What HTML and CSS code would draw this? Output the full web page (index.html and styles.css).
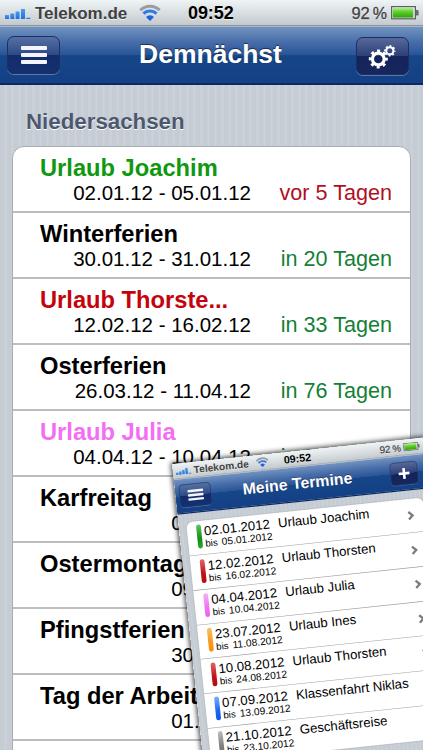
FILE: index.html
```
<!DOCTYPE html>
<html lang="de">

<head>
    <meta charset="UTF-8">
    <meta name="viewport" content="width=device-width, initial-scale=1.0">
    <title>Demnächst</title>
    <link rel="stylesheet" href="styles.css">
</head>

<body>
    <!-- shared icons -->
    <svg class="defs" width="0" height="0">
        <defs>
            <linearGradient id="bar-fill" x1="0" y1="0" x2="0" y2="1">
                <stop offset="0" stop-color="#4a9cf0" />
                <stop offset="1" stop-color="#1f6fe0" />
            </linearGradient>
            <linearGradient id="battery-fill" x1="0" y1="0" x2="0" y2="1">
                <stop offset="0" stop-color="#b4ec8c" />
                <stop offset="0.4" stop-color="#5fd02c" />
                <stop offset="1" stop-color="#33a010" />
            </linearGradient>
        </defs>
        <symbol id="signal" viewBox="0 0 26 12">
            <g fill="url(#bar-fill)">
                <rect x="0" y="7" width="4" height="4" />
                <rect x="5.3" y="5.5" width="4" height="5.5" />
                <rect x="10.6" y="3.5" width="4" height="7.5" />
                <rect x="16" y="1" width="4" height="10" />
                <rect x="21.3" y="9.6" width="4" height="1.4" />
            </g>
        </symbol>
        <symbol id="wifi" viewBox="0 0 22 17">
            <g fill="none" stroke-width="3">
                <path d="M1.3 6.2a13.6 13.6 0 0 1 19.4 0" stroke="#9a9da0" />
                <path d="M4.5 9.6a9.2 9.2 0 0 1 13 0" stroke="#2f7be8" />
            </g>
            <path d="M11 17l-4-4a5.6 5.6 0 0 1 8 0z" fill="#1d62dd" />
        </symbol>
        <symbol id="battery" viewBox="0 0 28 14">
            <rect x="0.6" y="0.6" width="23.8" height="12.2" fill="#e2e5e6" stroke="#5b6061" stroke-width="1.2" />
            <rect x="1.8" y="1.8" width="20.4" height="9.8" fill="url(#battery-fill)" />
            <path d="M25 4h1.3a1.4 1.4 0 0 1 1.4 1.4v2.8a1.4 1.4 0 0 1-1.4 1.4H25z" fill="#686d6f" />
        </symbol>
        <symbol id="chevron" viewBox="0 0 12 16">
            <path d="M2.3 1.8L8.8 8l-6.5 6.2" fill="none" stroke="#7c7c7c" stroke-width="3.9" />
        </symbol>
    </svg>

    <div class="phone">
        <div class="status-bar">
            <svg class="signal"><use href="#signal" /></svg>
            <span class="carrier">Telekom.de</span>
            <svg class="wifi"><use href="#wifi" /></svg>
            <span class="clock">09:52</span>
            <span class="percent">92<span class="sign">%</span></span>
            <svg class="battery"><use href="#battery" /></svg>
        </div>
        <header class="nav-bar">
            <button class="nav-button menu"><i></i><i></i><i></i></button>
            <h1>Demnächst</h1>
            <button class="nav-button settings">
                <svg width="28" height="26" viewBox="0 0 28 26" fill="none" stroke="#fff">
                    <circle cx="10.3" cy="16" r="5.9" stroke-width="3.2" />
                    <circle cx="10.3" cy="16" r="8" stroke-width="3" stroke-dasharray="3 3.28" stroke-dashoffset="1.5" />
                    <circle cx="21.8" cy="7.8" r="3.6" stroke-width="2.1" />
                    <circle cx="21.8" cy="7.8" r="4.9" stroke-width="1.6" stroke-dasharray="1.9 1.95" stroke-dashoffset="0.9" />
                </svg>
            </button>
        </header>

        <main class="content">
            <h2>Niedersachsen</h2>
            <ul class="card">
                <li class="holiday">
                    <div class="name green">Urlaub Joachim</div>
                    <div class="info"><span class="date">02.01.12 - 05.01.12</span><span class="days past">vor 5 Tagen</span></div>
                </li>
                <li class="holiday">
                    <div class="name">Winterferien</div>
                    <div class="info"><span class="date">30.01.12 - 31.01.12</span><span class="days">in 20 Tagen</span></div>
                </li>
                <li class="holiday">
                    <div class="name red">Urlaub Thorste...</div>
                    <div class="info"><span class="date">12.02.12 - 16.02.12</span><span class="days">in 33 Tagen</span></div>
                </li>
                <li class="holiday">
                    <div class="name">Osterferien</div>
                    <div class="info"><span class="date">26.03.12 - 11.04.12</span><span class="days">in 76 Tagen</span></div>
                </li>
                <li class="holiday">
                    <div class="name pink">Urlaub Julia</div>
                    <div class="info"><span class="date">04.04.12 - 10.04.12</span><span class="days">in 85 Tagen</span></div>
                </li>
                <li class="holiday">
                    <div class="name">Karfreitag</div>
                    <div class="info"><span class="date">06.04.12</span></div>
                </li>
                <li class="holiday">
                    <div class="name">Ostermontag</div>
                    <div class="info"><span class="date">09.04.12</span></div>
                </li>
                <li class="holiday">
                    <div class="name">Pfingstferien</div>
                    <div class="info"><span class="date">30.04.12</span></div>
                </li>
                <li class="holiday">
                    <div class="name">Tag der Arbeit</div>
                    <div class="info"><span class="date">01.05.12</span></div>
                </li>
                <li class="holiday"></li>
            </ul>
        </main>
    </div>

    <div class="phone front">
        <div class="status-bar">
            <svg class="signal"><use href="#signal" /></svg>
            <span class="carrier">Telekom.de</span>
            <svg class="wifi"><use href="#wifi" /></svg>
            <span class="clock">09:52</span>
            <span class="percent">92<span class="sign">%</span></span>
            <svg class="battery"><use href="#battery" /></svg>
        </div>
        <header class="nav-bar">
            <button class="nav-button menu"><i></i><i></i><i></i></button>
            <h1>Meine Termine</h1>
            <button class="nav-button add">
                <svg width="20" height="20" viewBox="0 0 20 20"><path d="M10 1v18M1 10h18" stroke="#fff" stroke-width="4.4" /></svg>
            </button>
        </header>

        <main class="content">
            <ul class="card">
                <li class="event">
                    <span class="marker green"></span>
                    <div class="when">02.01.2012<small>bis<span>05.01.2012</span></small></div>
                    <div class="what">Urlaub Joachim</div>
                    <svg class="chevron"><use href="#chevron" /></svg>
                </li>
                <li class="event">
                    <span class="marker red"></span>
                    <div class="when">12.02.2012<small>bis<span>16.02.2012</span></small></div>
                    <div class="what">Urlaub Thorsten</div>
                    <svg class="chevron"><use href="#chevron" /></svg>
                </li>
                <li class="event">
                    <span class="marker pink"></span>
                    <div class="when">04.04.2012<small>bis<span>10.04.2012</span></small></div>
                    <div class="what">Urlaub Julia</div>
                    <svg class="chevron"><use href="#chevron" /></svg>
                </li>
                <li class="event">
                    <span class="marker orange"></span>
                    <div class="when">23.07.2012<small>bis<span>11.08.2012</span></small></div>
                    <div class="what">Urlaub Ines</div>
                    <svg class="chevron"><use href="#chevron" /></svg>
                </li>
                <li class="event">
                    <span class="marker red"></span>
                    <div class="when">10.08.2012<small>bis<span>24.08.2012</span></small></div>
                    <div class="what">Urlaub Thorsten</div>
                    <svg class="chevron"><use href="#chevron" /></svg>
                </li>
                <li class="event">
                    <span class="marker blue"></span>
                    <div class="when">07.09.2012<small>bis<span>13.09.2012</span></small></div>
                    <div class="what">Klassenfahrt Niklas</div>
                    <svg class="chevron"><use href="#chevron" /></svg>
                </li>
                <li class="event">
                    <span class="marker gray"></span>
                    <div class="when">21.10.2012<small>bis<span>23.10.2012</span></small></div>
                    <div class="what">Geschäftsreise</div>
                    <svg class="chevron"><use href="#chevron" /></svg>
                </li>
            </ul>
        </main>
    </div>
</body>

</html>
```
FILE: styles.css
```
* {
    margin: 0;
    padding: 0;
    box-sizing: border-box;
}

body {
    position: relative;
    width: 423px;
    height: 750px;
    overflow: hidden;
    font-family: "Liberation Sans", Arial, sans-serif;
    color: #000;
}

ul {
    list-style: none;
}

.defs {
    display: block;
    position: absolute;
}

.phone {
    width: 423px;
    height: 750px;
    overflow: hidden;
    background: repeating-linear-gradient(90deg, #c5ccd4 0 4px, #cbd2d9 5px 6px, #c5ccd4 7px);
}

/* second phone, tilted over the lower right corner */
.front {
    position: absolute;
    left: 171.5px;
    top: 464px;
    height: 540px;
    transform-origin: 0 0;
    transform: rotate(-6deg) scale(0.6);
    box-shadow: 0 0 9px 2px rgba(0, 0, 0, 0.75);
}

/* status bar */

.status-bar {
    display: flex;
    align-items: center;
    height: 26px;
    padding: 0 4px 0 5px;
    background: linear-gradient(#eff4f5, #d5dbde 60%, #c3c9cc);
    border-bottom: 1px solid #8e9599;
    color: #414141;
    text-shadow: 0 1px 0 rgba(255, 255, 255, 0.7);
}

.front .status-bar {
    padding-right: 9px;
}

.signal {
    width: 26px;
    height: 12px;
    margin-top: 3px;
}

.carrier {
    width: 95px;
    margin: 2px 0 0 4px;
    font-size: 17px;
    font-weight: bold;
}

.wifi {
    width: 22px;
    height: 17px;
    margin-left: 9px;
}

.clock {
    margin: 2px 0 0 27px;
    font-size: 18px;
    font-weight: bold;
    letter-spacing: -0.1px;
    color: #000;
}

.front .clock {
    margin-left: 25px;
}

.percent {
    margin: 1px 0 0 auto;
    font-size: 16.5px;
    -webkit-text-stroke: 0.3px #414141;
}

.sign {
    margin-left: 3px;
    font-size: 16px;
}

.battery {
    width: 28px;
    height: 14px;
    margin-left: 4px;
}

/* navigation bar */

.nav-bar {
    display: flex;
    justify-content: space-between;
    height: 59px;
    padding: 9px 14px 0 7px;
    background: linear-gradient(#7393c0, #4a70ab 25%, #295497 50%, #164688 51%, #144085);
    border-top: 1px solid #a5b9d6;
    border-bottom: 2px solid #0d2a60;
}

.nav-bar h1 {
    padding: 1px 0 0 5px;
    font-size: 26.5px;
    line-height: 34px;
    color: #fff;
    text-shadow: 0 -1px 1px rgba(0, 0, 0, 0.55);
}

.front .nav-bar {
    padding-right: 17px;
}

.front .nav-bar h1 {
    padding: 1px 11px 0 0;
}

.nav-button {
    display: flex;
    flex-direction: column;
    align-items: center;
    justify-content: center;
    gap: 3px;
    width: 53px;
    height: 38px;
    border: 1px solid #1a2f62;
    border-radius: 7px;
    background: linear-gradient(#5670a3, #2d4a88 50%, #132d6c 51%, #15306f);
    box-shadow: 0 1px 0 rgba(255, 255, 255, 0.3);
}

.menu i {
    width: 26px;
    height: 4px;
    border-radius: 1px;
    background: #f3f5fa;
}

.settings,
.add {
    margin-top: 1px;
    background: linear-gradient(#58699a, #2b3f78 50%, #14235a 51%, #17275c);
}

.add {
    width: 46px;
}

/* content */

.content {
    padding: 0 12px;
}

.content h2 {
    padding: 24px 0 0 14px;
    font-size: 22.3px;
    line-height: 26px;
    color: #4d576e;
    text-shadow: 0 1px 0 #fff;
}

.card {
    background: #fff;
    border: 1px solid #a9adb1;
    border-radius: 12px;
    overflow: hidden;
}

.content h2 + .card {
    margin-top: 11px;
}

.holiday {
    height: 66px;
    padding: 7px 18px 0 27px;
    border-bottom: 2px solid #bdbdbd;
}

.name {
    font-size: 23.7px;
    font-weight: bold;
    line-height: 28px;
}

.info {
    display: flex;
    line-height: 22px;
}

.date {
    width: 211px;
    font-size: 20.5px;
    text-align: right;
}

.days {
    margin-left: auto;
    font-size: 21.6px;
    color: #138036;
}

.past {
    color: #b00f24;
}

.name.green {
    color: #109810;
}

.name.red {
    color: #c4040c;
}

.name.pink {
    color: #f46ef4;
}

/* event list */

.front .card {
    margin-top: 12.5px;
}

.event {
    display: flex;
    height: 57.7px;
    padding: 5.5px 17px 0 15.5px;
    border-bottom: 1px solid #9c9c9c;
}

.event:last-child {
    border-bottom: 0;
}

.marker {
    width: 8px;
    height: 40px;
    margin-top: 1px;
    border-radius: 4px;
}

.marker.green {
    background: linear-gradient(#5cc45c, #109018 60%, #2aa82a);
}

.marker.red {
    background: linear-gradient(#e06868, #c01018 60%, #b80810);
}

.marker.pink {
    background: linear-gradient(#f8b0f8, #f070f0 60%, #f060f0);
}

.marker.orange {
    background: linear-gradient(#f8c070, #f89818 60%, #f89008);
}

.marker.blue {
    background: linear-gradient(#80b0ff, #1868f0 60%, #0858f0);
}

.marker.gray {
    background: linear-gradient(#c0c0c0, #808080 60%, #707070);
}

.when {
    width: 124px;
    margin-left: 5px;
    font-size: 22px;
    line-height: 25px;
}

.when small {
    display: flex;
    gap: 7px;
    font-size: 16px;
    line-height: 18px;
}

.when small span {
    font-size: 17px;
}

.what {
    font-size: 22px;
    line-height: 25px;
}

.chevron {
    width: 12px;
    height: 16px;
    margin: 15px 0 0 auto;
}
```
